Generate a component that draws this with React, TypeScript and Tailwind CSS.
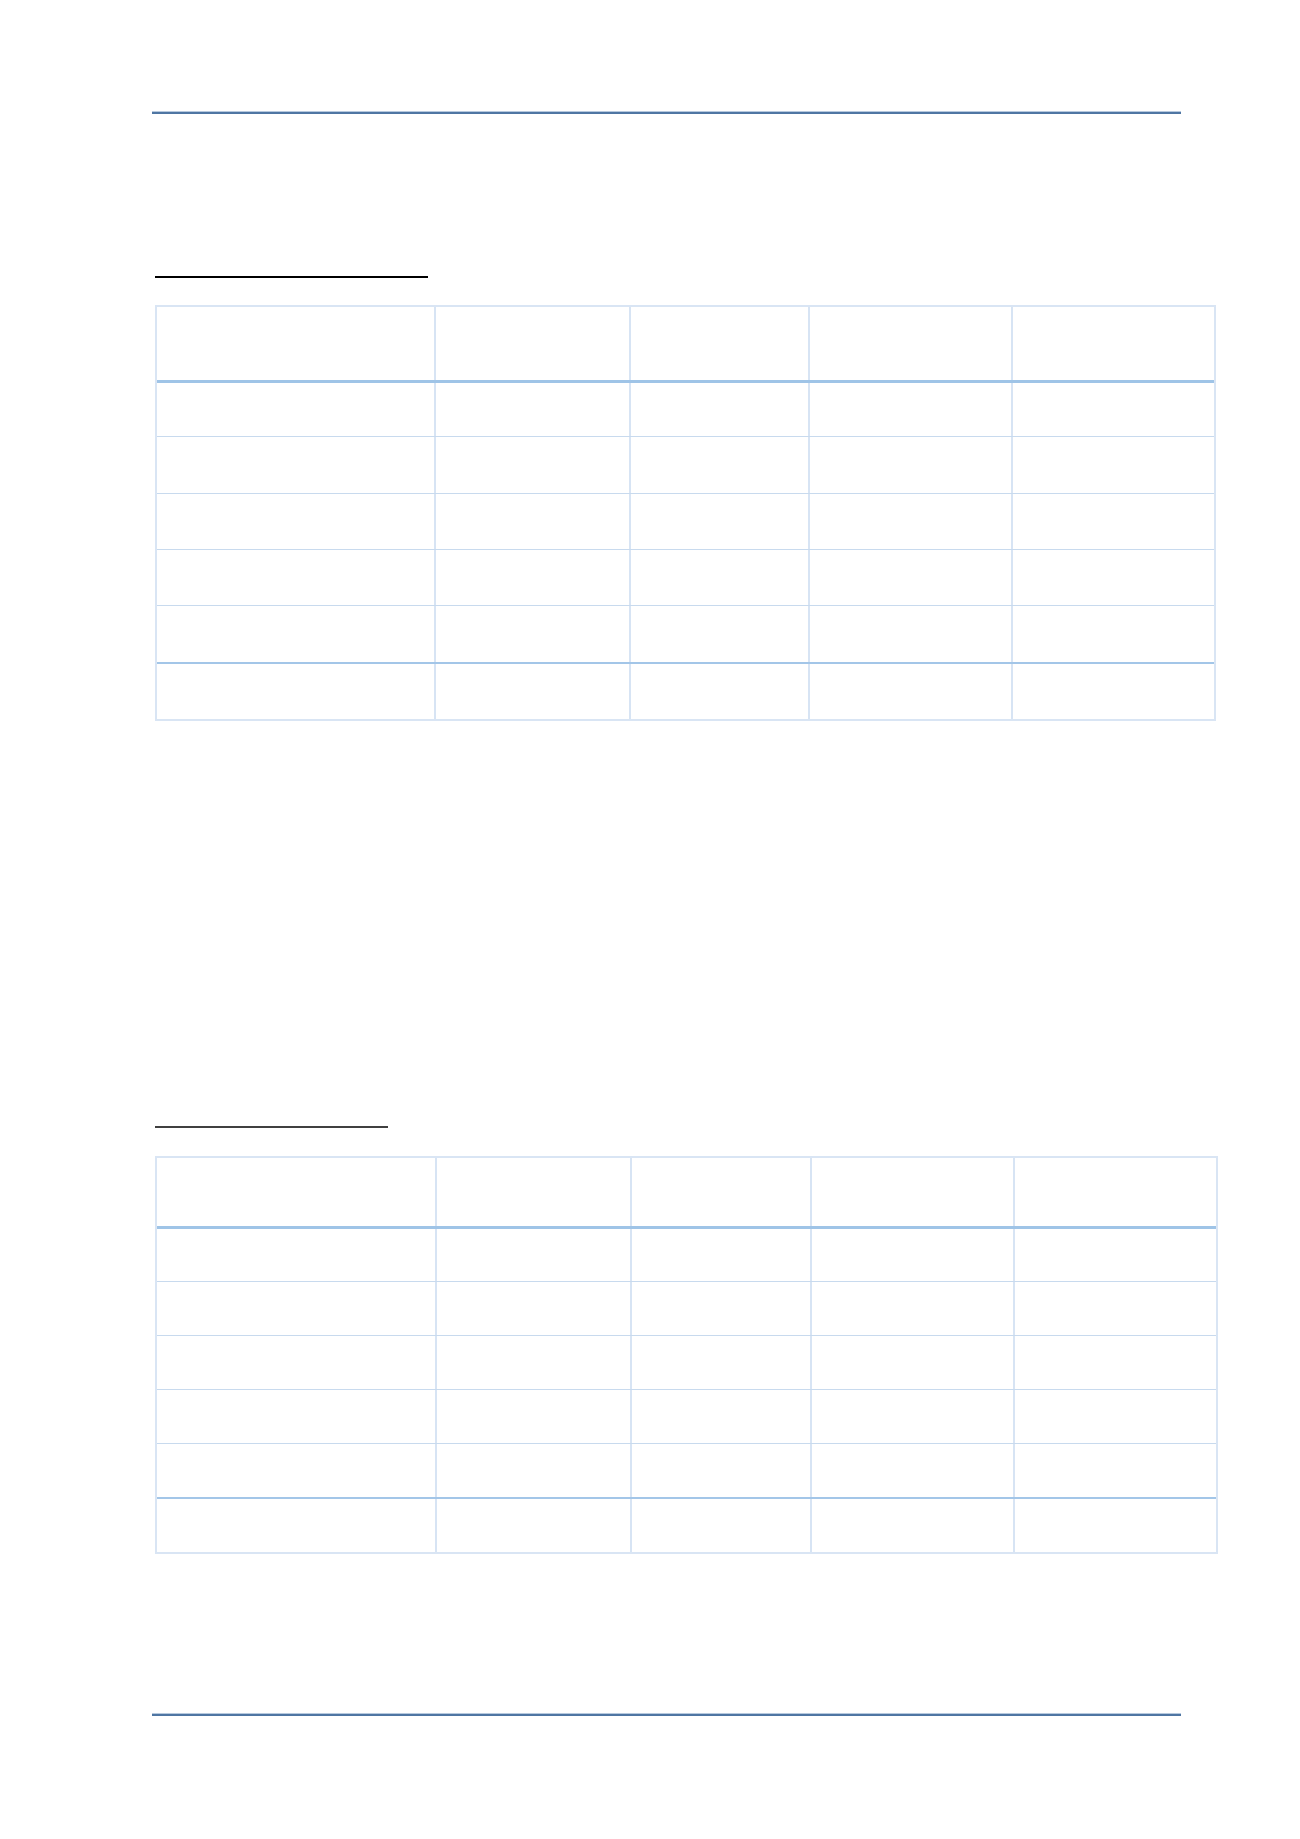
const colsA = ['w-[279px]', 'w-[195px]', 'w-[179px]', 'w-[203px]', 'w-[201px]']
const colsB = ['w-[280px]', 'w-[195px]', 'w-[180px]', 'w-[203px]', 'w-[201px]']

function PageRule() {
  return (
    <div className="ml-[152px] w-[1029px]">
      <div className="h-px bg-[#b7c9de]" />
      <div className="h-[2px] bg-[#4f76a3]" />
    </div>
  )
}

function Row({ cols, height, bottom }: { cols: string[]; height: string; bottom: string }) {
  return (
    <div className={`flex ${bottom}`}>
      {cols.map((w, i) => (
        <div
          key={i}
          className={`${w} ${height} ${i < cols.length - 1 ? 'border-r-2 border-[#d7e4f4]' : ''}`}
        />
      ))}
    </div>
  )
}

interface TableProps {
  cols: string[]
  width: string
  header: string
  rows: string[]
}

function EmptyTable({ cols, width, header, rows }: TableProps) {
  return (
    <div className={`ml-[155px] ${width} border-2 border-[#d9e5f4]`}>
      <Row cols={cols} height={header} bottom="border-b-[3px] border-[#9fc4e7]" />
      {rows.map((h, i) => (
        <Row
          key={i}
          cols={cols}
          height={h}
          bottom={
            i === rows.length - 1
              ? ''
              : i === rows.length - 2
                ? 'border-b-2 border-[#a3c6e8]'
                : 'border-b border-[#c8daee]'
          }
        />
      ))}
    </div>
  )
}

export default function App() {
  return (
    <div className="w-[1300px] h-[1839px] bg-white pt-[111px] font-['Liberation_Sans',sans-serif]">
      <PageRule />

      {/* first section */}
      <div className="mt-[162px] ml-[155px] w-[273px] h-[2px] bg-black" />
      <div className="mt-[27px]">
        <EmptyTable
          cols={colsA}
          width="w-[1061px]"
          header="h-[73px]"
          rows={['h-[53px]', 'h-[56px]', 'h-[55px]', 'h-[55px]', 'h-[56px]', 'h-[55px]']}
        />
      </div>

      {/* second section */}
      <div className="mt-[405px] ml-[155px] w-[233px] h-[2px] bg-[#404040]" />
      <div className="mt-[28px]">
        <EmptyTable
          cols={colsB}
          width="w-[1063px]"
          header="h-[68px]"
          rows={['h-[52px]', 'h-[53px]', 'h-[53px]', 'h-[53px]', 'h-[53px]', 'h-[53px]']}
        />
      </div>

      <div className="mt-[159px]">
        <PageRule />
      </div>
    </div>
  )
}
